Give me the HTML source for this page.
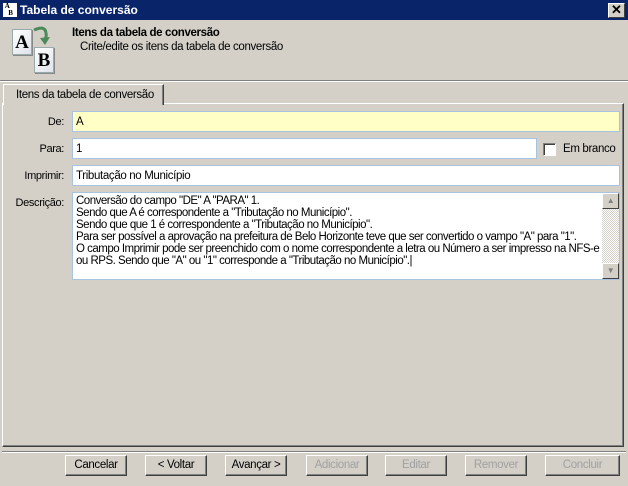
<!DOCTYPE html>
<html><head><meta charset="utf-8"><style>
*{box-sizing:border-box;margin:0;padding:0}
body{width:628px;height:486px;background:#d4d0c8;font-family:"Liberation Sans",sans-serif;font-size:11px;color:#000;position:relative;overflow:hidden;letter-spacing:-0.35px}
.abs{position:absolute}
.title{left:0;top:0;width:628px;height:20px;background:#0a246a;color:#fff;font-weight:bold;font-size:12px;letter-spacing:0}
.close{left:608px;top:3px;width:17px;height:15px;background:#d4d0c8;border:1px solid;border-color:#fff #404040 #404040 #fff;font-size:13px;font-weight:bold;text-align:center;line-height:12px;color:#000;letter-spacing:0}
.inp{background:#fff;border:1px solid #a7c3e0;padding:4px 0 0 3px;height:21px;font-size:11.5px}
.lbl{text-align:right;width:64px;left:0}
.btn{top:455px;height:21px;width:62px;border:1px solid;border-color:#fff #404040 #404040 #fff;box-shadow:inset -1px -1px #808080;text-align:center;line-height:19px;font-size:11.5px}
.dis{color:#a0a0a0}
</style></head><body>
<div class="abs title">
 <div class="abs" style="left:3px;top:3px;width:14px;height:14px;background:#fff;font-size:7px;color:#000;line-height:7px;font-family:'Liberation Serif';font-weight:bold">&nbsp;A<br>&nbsp;&nbsp;&nbsp;B</div>
 <div class="abs" style="left:20px;top:3px">Tabela de conversão</div>
</div>
<div class="abs close">✕</div>
<div class="abs" style="left:12px;top:29px;width:20px;height:26px;background:linear-gradient(135deg,#fff,#dfe3ea);border:1px solid #9aa;box-shadow:1px 1px #888;font:bold 19px 'Liberation Serif',serif;text-align:center;line-height:26px;letter-spacing:0">A</div>
<div class="abs" style="left:34px;top:47px;width:20px;height:26px;background:linear-gradient(135deg,#fff,#dfe3ea);border:1px solid #9aa;box-shadow:1px 1px #888;font:bold 19px 'Liberation Serif',serif;text-align:center;line-height:26px;letter-spacing:0">B</div>
<svg class="abs" style="left:31px;top:25px" width="22" height="22"><path d="M3 5 Q14 0 15 8 Q16 12 13 16" stroke="#4a8a5a" stroke-width="3" fill="none"/><path d="M9 13 L14 20 L19 12 Z" fill="#4a8a5a"/></svg>
<div class="abs" style="left:72px;top:27px;font-weight:bold;font-size:11.5px">Itens da tabela de conversão</div>
<div class="abs" style="left:80px;top:41px;font-size:11.5px">Crite/edite os itens da tabela de conversão</div>
<div class="abs" style="left:0;top:80px;width:628px;height:2px;border-top:1px solid #808080;border-bottom:1px solid #fff"></div>
<div class="abs" style="left:2px;top:103px;width:622px;height:344px;border:1px solid;border-color:#fff #404040 #404040 #fff;box-shadow:inset -1px -1px #808080"></div>
<div class="abs" style="left:3px;top:84px;width:161px;height:21px;background:#d4d0c8;border:1px solid;border-color:#fff #404040 transparent #fff;border-bottom:none;box-shadow:inset -1px 0 #808080;padding:4px 0 0 12px;font-size:11.5px">Itens da tabela de conversão</div>
<div class="abs lbl" style="top:116px">De:</div>
<div class="abs inp" style="left:72px;top:111px;width:548px;background:#ffffc6">A</div>
<div class="abs lbl" style="top:143px">Para:</div>
<div class="abs inp" style="left:72px;top:138px;width:465px">1</div>
<div class="abs" style="left:543px;top:143px;width:13px;height:13px;background:#fff;border:1px solid;border-color:#808080 #fff #fff #808080;box-shadow:inset 1px 1px #404040"></div>
<div class="abs" style="left:563px;top:143px;font-size:11.5px">Em branco</div>
<div class="abs lbl" style="top:170px">Imprimir:</div>
<div class="abs inp" style="left:72px;top:165px;width:548px">Tributação no Município</div>
<div class="abs lbl" style="top:197px">Descrição:</div>
<div class="abs inp" style="left:72px;top:192px;width:548px;height:88px;line-height:12px;font-size:11.5px;padding-top:2px;letter-spacing:-0.5px;white-space:nowrap;overflow:hidden">Conversão do campo "DE" A "PARA" 1.<br>Sendo que A é correspondente a "Tributação no Município".<br>Sendo que que 1 é correspondente a "Tributação no Município".<br>Para ser possível a aprovação na prefeitura de Belo Horizonte teve que ser convertido o vampo "A" para "1".<br>O campo Imprimir pode ser preenchido com o nome correspondente a letra ou Número a ser impresso na NFS-e<br>ou RPS. Sendo que "A" ou "1" corresponde a "Tributação no Município".|</div>
<div class="abs" style="left:602px;top:193px;width:17px;height:86px;background:repeating-conic-gradient(#d4d0c8 0 25%,#fff 0 50%) 0 0/2px 2px"></div>
<div class="abs" style="left:602px;top:193px;width:17px;height:16px;background:#d4d0c8;border:1px solid;border-color:#fff #404040 #404040 #fff;font-size:8px;text-align:center;line-height:13px;color:#808080">▲</div>
<div class="abs" style="left:602px;top:263px;width:17px;height:16px;background:#d4d0c8;border:1px solid;border-color:#fff #404040 #404040 #fff;font-size:8px;text-align:center;line-height:13px;color:#808080">▼</div>
<div class="abs" style="left:2px;top:451px;width:624px;height:2px;border-top:1px solid #808080;border-bottom:1px solid #fff"></div>
<div class="abs btn" style="left:65px">Cancelar</div>
<div class="abs btn" style="left:145px">&lt; Voltar</div>
<div class="abs btn" style="left:225px">Avançar &gt;</div>
<div class="abs btn dis" style="left:306px">Adicionar</div>
<div class="abs btn dis" style="left:385px">Editar</div>
<div class="abs btn dis" style="left:465px">Remover</div>
<div class="abs btn dis" style="left:545px;width:75px">Concluir</div>
</body></html>
